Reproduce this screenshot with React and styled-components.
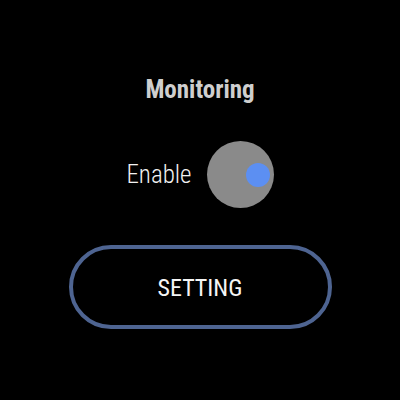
import React, { useState } from "react";
import styled, { createGlobalStyle } from "styled-components";

const GlobalStyle = createGlobalStyle`
  html, body {
    margin: 0;
    padding: 0;
    background: #000;
  }
  body {
    font-family: "Roboto Condensed", Roboto, "Liberation Sans", sans-serif;
  }
`;

const Screen = styled.div`
  width: 400px;
  height: 400px;
  background: #000;
  display: flex;
  flex-direction: column;
  align-items: center;
  padding-top: 73px;
  box-sizing: border-box;
`;

const Title = styled.h1`
  margin: 0;
  font-size: 25px;
  font-weight: 700;
  color: #cfcfcf;
  line-height: 33px;
`;

const Row = styled.div`
  display: flex;
  align-items: center;
  gap: 15px;
  margin-top: 35px;
`;

const Label = styled.span`
  font-size: 25px;
  font-weight: 300;
  color: #f2f2f2;
`;

const Toggle = styled.button`
  width: 67px;
  height: 67px;
  border-radius: 50%;
  border: none;
  background: #8a8a8a;
  display: flex;
  align-items: center;
  justify-content: ${(p) => (p.$on ? "flex-end" : "flex-start")};
  padding: 0 4px;
  cursor: pointer;
`;

const Knob = styled.span`
  width: 24px;
  height: 24px;
  border-radius: 50%;
  background: ${(p) => (p.$on ? "#5c8ff2" : "#d0d0d0")};
`;

const SettingButton = styled.button`
  margin-top: 37px;
  width: 263px;
  height: 84px;
  box-sizing: border-box;
  border: 4px solid #4e6491;
  border-radius: 42px;
  background: #000;
  color: #f5f5f5;
  font-family: inherit;
  font-size: 24px;
  font-weight: 400;
  padding-top: 2px;
  cursor: pointer;
`;

export default function App() {
  const [on, setOn] = useState(true);
  return (
    <>
      <GlobalStyle />
      <Screen>
        <Title>Monitoring</Title>
        <Row>
          <Label>Enable</Label>
          <Toggle $on={on} onClick={() => setOn(!on)}>
            <Knob $on={on} />
          </Toggle>
        </Row>
        <SettingButton>SETTING</SettingButton>
      </Screen>
    </>
  );
}
